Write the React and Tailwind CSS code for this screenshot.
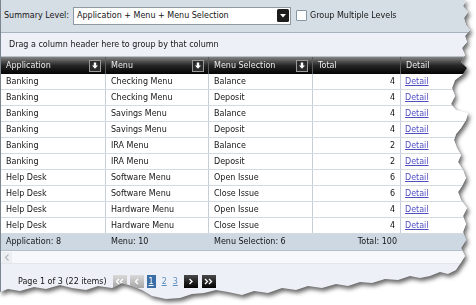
import React from 'react'

const rows = [
  ['Banking', 'Checking Menu', 'Balance', 4],
  ['Banking', 'Checking Menu', 'Deposit', 4],
  ['Banking', 'Savings Menu', 'Balance', 4],
  ['Banking', 'Savings Menu', 'Deposit', 4],
  ['Banking', 'IRA Menu', 'Balance', 2],
  ['Banking', 'IRA Menu', 'Deposit', 2],
  ['Help Desk', 'Software Menu', 'Open Issue', 6],
  ['Help Desk', 'Software Menu', 'Close Issue', 6],
  ['Help Desk', 'Hardware Menu', 'Open Issue', 4],
  ['Help Desk', 'Hardware Menu', 'Close Issue', 4],
]

function FilterIcon(){
  return (
    <svg width="12" height="12" viewBox="0 0 12 12" className="shrink-0">
      <rect x="0.5" y="0.5" width="11" height="11" fill="#2b2b2b" stroke="#9a9a9a" />
      <path d="M4.8 2.5h2.4v3h1.8L6 8.8 3 5.5h1.8z" fill="#fff" />
    </svg>
  )
}

function HeaderCell({label, filter}){
  return (
    <div className="flex items-center justify-between pl-[5px] pr-[4px] border-r border-[#5c5c5c] text-[#ececec]">
      <span>{label}</span>
      {filter && <FilterIcon />}
    </div>
  )
}

// pager chevrons: dir -1 = left, 1 = right; n = 1 or 2 chevrons
function Chevron({dir, n}){
  const d = dir > 0
    ? (n === 2 ? 'M3 4l2.5 2.5L3 9M7 4l2.5 2.5L7 9' : 'M5.5 4L8 6.5 5.5 9')
    : (n === 2 ? 'M6 4L3.5 6.5 6 9M10 4L7.5 6.5 10 9' : 'M8 4L5.5 6.5 8 9')
  return (
    <svg width="13" height="13" viewBox="0 0 13 13">
      <path d={d} fill="none" stroke="#fff" strokeWidth="1.4" />
    </svg>
  )
}

export default function App(){
  return (
    <div className="w-[476px] h-[305px] bg-white overflow-hidden font-['DejaVu_Sans',sans-serif] text-[8px] text-[#151515]">
      <div className="[filter:drop-shadow(2px_3px_2px_rgba(0,0,0,0.6))]">
        <div className="w-[474px] h-[303px] flex flex-col bg-[#eef0f7] border-l border-[#7b858f] [clip-path:polygon(0_0,466px_0,463px_6px,468px_12px,464px_18px,466px_25px,470px_30px,465px_36px,467px_42px,462px_48px,465px_55px,461px_62px,467px_68px,463px_74px,455px_80px,452px_88px,455px_96px,451px_104px,456px_110px,468px_113px,466px_120px,461px_128px,456px_134px,454px_140px,457px_148px,461px_155px,458px_162px,463px_170px,466px_178px,462px_186px,458px_192px,461px_200px,467px_208px,463px_216px,466px_224px,463px_232px,466px_240px,461px_248px,465px_256px,460px_264px,456px_270px,448px_274px,440px_272px,430px_276px,420px_278px,410px_276px,398px_280px,385px_279px,372px_283px,360px_282px,348px_286px,336px_284px,322px_288px,308px_286px,296px_290px,282px_288px,268px_293px,254px_291px,242px_295px,228px_292px,216px_290px,204px_293px,192px_294px,180px_298px,166px_299px,152px_296px,142px_290px,132px_286px,122px_283px,112px_288px,98px_286px,86px_290px,72px_288px,60px_285px,46px_289px,34px_287px,20px_291px,8px_289px,0_292px)]">

          <div className="h-[33px] shrink-0 flex items-center bg-[#d5dde5] border-b border-[#a7b1bb] pl-[3px] pb-[1px]">
            <span className="mr-[4px]">Summary Level:</span>
            <div className="w-[218px] h-[18px] flex items-center justify-between bg-white border border-[#8d98a3] pl-[3px] pr-[1px]">
              <span>Application + Menu + Menu Selection</span>
              <svg width="12" height="13" viewBox="0 0 12 13">
                <rect x="0" y="0" width="12" height="13" rx="1.5" fill="#1c1c1c" />
                <path d="M3 5h6L6 8.5z" fill="#fff" />
              </svg>
            </div>
            <div className="w-[11px] h-[11px] ml-[5px] mr-[3px] bg-white border border-[#8796a5] rounded-[1px]"></div>
            <span>Group Multiple Levels</span>
          </div>

          <div className="h-[24px] shrink-0 flex items-center pl-[8px] bg-[#eef0f8] border-b border-[#b9c1ca]">
            Drag a column header here to group by that column
          </div>

          <div className="grid grid-cols-[105px_103px_104px_88px_1fr] h-[17px] shrink-0 bg-gradient-to-b from-[#858585] via-[#262626] to-[#050505]">
            <HeaderCell label="Application" filter />
            <HeaderCell label="Menu" filter />
            <HeaderCell label="Menu Selection" filter />
            <HeaderCell label="Total" />
            <HeaderCell label="Detail" />
          </div>

          <div className="bg-white shrink-0">
            {rows.map((r, i) => (
              <div key={i} className="grid grid-cols-[105px_103px_104px_88px_1fr] h-[16px] border-b border-[#d3dae2]">
                <div className="flex items-center px-[5px] border-r border-[#c6ced7]">{r[0]}</div>
                <div className="flex items-center px-[5px] border-r border-[#c6ced7]">{r[1]}</div>
                <div className="flex items-center px-[5px] border-r border-[#c6ced7]">{r[2]}</div>
                <div className="flex items-center justify-end px-[5px] border-r border-[#c6ced7]">{r[3]}</div>
                <div className="flex items-center px-[4px]">
                  <span className="text-[#4f4fc4] underline">Detail</span>
                </div>
              </div>
            ))}
          </div>

          <div className="grid grid-cols-[105px_103px_104px_88px_1fr] h-[17px] shrink-0 bg-[#cdd8e3] border-b border-[#b3bfcb]">
            <div className="flex items-center px-[5px]">Application: 8</div>
            <div className="flex items-center px-[5px]">Menu: 10</div>
            <div className="flex items-center px-[5px]">Menu Selection: 6</div>
            <div className="flex items-center justify-end px-[4px]">Total: 100</div>
            <div></div>
          </div>

          <div className="h-[13px] shrink-0 flex items-center bg-[#f7f8fb] border-b border-[#e1e5ec]">
            <div className="w-[10px] h-[11px] ml-[1px] flex items-center justify-center bg-[#eceef2]">
              <svg width="8" height="9" viewBox="0 0 8 9">
                <path d="M5.5 1.5L2.5 4.5l3 3" fill="none" stroke="#b4b8be" strokeWidth="1.2" />
              </svg>
            </div>
          </div>

          <div className="flex items-start pt-[11px] pl-[17px]">
            <span className="h-[13px] flex items-center mr-[6px]">Page 1 of 3 (22 items)</span>
            <div className="flex items-center gap-[3px]">
              <div className="w-[14px] h-[13px] flex items-center justify-center bg-gradient-to-b from-[#dadada] to-[#a6a6a6]"><Chevron dir={-1} n={2} /></div>
              <div className="w-[14px] h-[13px] flex items-center justify-center bg-gradient-to-b from-[#dadada] to-[#a6a6a6]"><Chevron dir={-1} n={1} /></div>
              <div className="w-[9px] h-[13px] flex items-center justify-center bg-[#3b6ea6] text-white underline">1</div>
              <span className="ml-[3px] text-[#5b8ec2] underline">2</span>
              <span className="ml-[3px] text-[#5b8ec2] underline">3</span>
              <div className="w-[14px] h-[13px] ml-[3px] flex items-center justify-center bg-gradient-to-b from-[#4a4a4a] to-[#050505]"><Chevron dir={1} n={1} /></div>
              <div className="w-[14px] h-[13px] ml-[1px] flex items-center justify-center bg-gradient-to-b from-[#4a4a4a] to-[#050505]"><Chevron dir={1} n={2} /></div>
            </div>
          </div>
        </div>
      </div>
    </div>
  )
}
